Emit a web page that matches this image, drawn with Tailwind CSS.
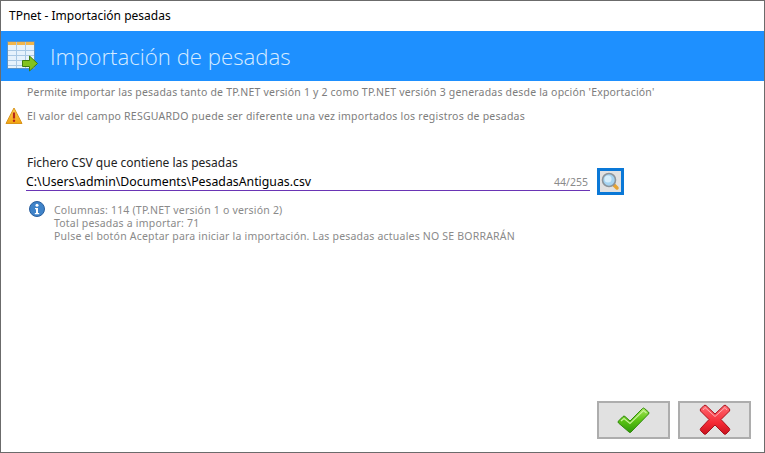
<!doctype html>
<html lang="es">
<head>
  <meta charset="utf-8">
  <title>TPnet - Importación pesadas</title>
  <script src="https://cdn.jsdelivr.net/npm/@tailwindcss/browser@4"></script>
</head>
<body class="bg-white">
  <div class="w-[765px] h-[453px] overflow-hidden flex flex-col border border-[#6b6b6b] font-['Noto_Sans',sans-serif]">
    <div class="h-[30px] shrink-0 flex items-center pl-[8px] text-[12px] text-black">TPnet - Importación pesadas</div>

    <header class="h-[50px] shrink-0 bg-[#1e90ff] flex items-center pl-[6px] gap-[11px]">
      <svg width="32" height="32" viewBox="0 0 32 32">
        <rect x="0.500" y="1.500" width="27" height="27" fill="#e6f2fc" stroke="#5b93c4"/>
        <rect x="1" y="2" width="26" height="3" fill="#f2b64a"/>
        <path d="M9.500 2v26M18.500 2v26M1 10.500h26M1 15.500h26M1 20.500h26M1 25.500h26" stroke="#a9c8e4" fill="none"/>
        <path d="M15.500 20.500h7v-4.500l8 7.500-8 7.500v-4.500h-7z" fill="#82c21f" stroke="#3f7d10"/>
      </svg>
      <span class="pt-[3px] text-[22.200px] font-light text-[#d6ebff] font-['Open_Sans',sans-serif] leading-none">Importación de pesadas</span>
    </header>

    <main class="flex-1 flex flex-col pl-[4px] pr-[4px] text-[#7d7d7d]">
      <p class="h-[20px] pt-[4px] pl-[22px] text-[10.500px] tracking-[0.19px] flex items-center">Permite importar las pesadas tanto de TP.NET versión 1 y 2 como TP.NET versión 3 generadas desde la opción 'Exportación'</p>

      <div class="h-[30px] flex items-center gap-[4px] text-[10.500px] tracking-[0.23px]">
        <svg width="18" height="18" viewBox="0 0 18 18">
          <defs>
            <linearGradient id="warn" x1="0" y1="0" x2="0" y2="1">
              <stop offset="0" stop-color="#ffd257"/>
              <stop offset="1" stop-color="#f2a30f"/>
            </linearGradient>
          </defs>
          <path d="M9 1 17 16.500H1z" fill="url(#warn)" stroke="#d8941a" stroke-linejoin="round"/>
          <path d="M9 5.500v6" stroke="#b5261a" stroke-width="2.200"/>
          <circle cx="9" cy="13.800" r="1.200" fill="#b5261a"/>
        </svg>
        <span class="pt-[2px]">El valor del campo RESGUARDO puede ser diferente una vez importados los registros de pesadas</span>
      </div>

      <div class="mt-[23px] pl-[21px]">
        <label class="block pl-[1px] text-[12px] leading-[18px] text-[#222]" for="fichero">Fichero CSV que contiene las pesadas</label>
        <div class="flex items-start gap-[7px]">
          <div class="w-[564px] h-[19px] pt-[3px] border-b border-[#6a35b5] flex items-center justify-between">
            <span id="fichero" class="text-[12.300px] text-black">C:\Users\admin\Documents\PesadasAntiguas.csv</span>
            <span class="text-[10.500px] text-[#8a8a8a] pr-[2px]">44/255</span>
          </div>
          <button class="w-[27px] h-[27px] -mt-[4px] border-[3px] border-[#0a78d7] bg-[#e1e1e1] flex items-center justify-center">
            <svg width="19" height="19" viewBox="0 0 19 19">
              <path d="M13 13l3 3" stroke="#e5a334" stroke-width="3.500" stroke-linecap="round"/>
              <circle cx="8" cy="8" r="6.500" fill="#a5d4f2" stroke="#8b949b" stroke-width="1.600"/>
              <circle cx="7" cy="7" r="3.500" fill="#d6eefb"/>
            </svg>
          </button>
        </div>
      </div>

      <div class="mt-[9px] flex gap-[9px] pl-[24px]">
        <svg width="16" height="16" viewBox="0 0 16 16" class="shrink-0 -mt-[3px]">
          <circle cx="8" cy="8" r="7.500" fill="#3f83c9" stroke="#2a5f9e"/>
          <circle cx="8" cy="4.300" r="1.500" fill="#fff"/>
          <path d="M6 7h3v5h1.200v1.300H5.800V12H7V8.200H6z" fill="#fff"/>
        </svg>
        <div class="text-[10.500px] leading-[13px] tracking-[0.2px] text-[#8a8a8a]">
          <p>Columnas: 114 (TP.NET versión 1 o versión 2)</p>
          <p>Total pesadas a importar: 71</p>
          <p>Pulse el botón Aceptar para iniciar la importación. Las pesadas actuales NO SE BORRARÁN</p>
        </div>
      </div>

      <div class="mt-auto mb-[13px] flex justify-end gap-[8px] pr-[9px]">
        <button class="w-[73px] h-[38px] bg-[#e1e1e1] border-2 border-[#adadad] flex items-center justify-center">
          <svg width="33" height="27" viewBox="0 0 33 27">
            <defs>
              <linearGradient id="ok" x1="0" y1="0" x2="0" y2="1">
                <stop offset="0" stop-color="#a6e45a"/>
                <stop offset="0.500" stop-color="#5cc414"/>
                <stop offset="1" stop-color="#2f9a08"/>
              </linearGradient>
            </defs>
            <path d="M1.500 14 6 9.500q1-1 2 0L13 14 25.500 1.500q1-1 2 0L31.500 5q1 1 0 2L14 25q-1 1-2 0L1.500 16q-1-1 0-2z" fill="url(#ok)" stroke="#2f8a0c" stroke-linejoin="round"/>
            <path d="M4 14 7 11.500l6 5L26.500 3.500l3 2.500" fill="none" stroke="#c8f29a" stroke-width="1.200"/>
          </svg>
        </button>
        <button class="w-[73px] h-[38px] bg-[#e1e1e1] border-2 border-[#adadad] flex items-center justify-center">
          <svg width="32" height="32" viewBox="0 0 32 32">
            <defs>
              <linearGradient id="no" x1="0" y1="0" x2="0" y2="1">
                <stop offset="0" stop-color="#ff6a72"/>
                <stop offset="0.600" stop-color="#f52a35"/>
                <stop offset="1" stop-color="#c9121e"/>
              </linearGradient>
            </defs>
            <path d="M7 1.500 16 10 25 1.500q1-.5 2 0l3.500 3.500q.5 1 0 2L22 15.500l8.500 9q.5 1 0 2L27 30q-1 .5-2 0l-9-9-9 9q-1 .5-2 0l-3.500-3.500q-.5-1 0-2l8.500-9L1.500 7q-.5-1 0-2L5 1.500q1-.5 2 0z" fill="url(#no)" stroke="#a8121c" stroke-linejoin="round"/>
            <path d="M4 6 6 3.500l10 9 10-9 2 2.500" fill="none" stroke="#ffb0b4"/>
          </svg>
        </button>
      </div>
    </main>
  </div>
</body>
</html>
